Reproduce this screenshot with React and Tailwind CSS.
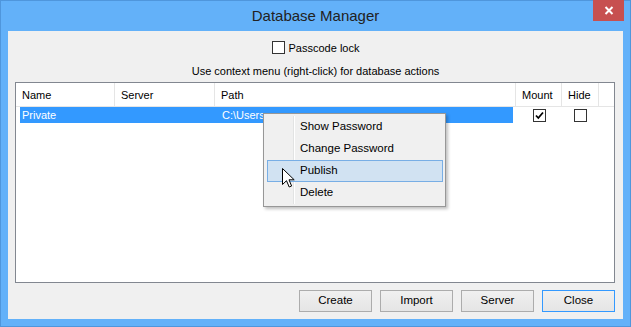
import React from "react";

const cols = [
  { label: "Name", w: "w-[99px]" },
  { label: "Server", w: "w-[100px]" },
  { label: "Path", w: "w-[301px]" },
  { label: "Mount", w: "w-[46px]" },
  { label: "Hide", w: "w-[37px]" },
];

function CheckBox({ checked }) {
  return (
    <div className="w-[13px] h-[13px] border border-[#333] bg-white flex items-center justify-center">
      {checked && (
        <svg width="9" height="9" viewBox="0 0 9 9">
          <path d="M1 4.5 L3.3 7 L8 1.5" stroke="#000" strokeWidth="1.8" fill="none" />
        </svg>
      )}
    </div>
  );
}

function Button({ children, primary }) {
  return (
    <button
      className={
        "w-[73px] h-[22px] text-[11.5px] text-black bg-gradient-to-b from-[#f0f0f0] to-[#e5e5e5] border " +
        (primary ? "border-[#3399ff]" : "border-[#acacac]")
      }
    >
      {children}
    </button>
  );
}

const menuItems = ["Show Password", "Change Password", "Publish", "Delete"];

export default function App() {
  return (
    <div
      className="relative w-[631px] h-[327px] bg-[#63b1f9] border border-[#4f96dc] flex flex-col"
      style={{ fontFamily: '"Liberation Sans", Arial, sans-serif' }}
    >
      {/* title bar */}
      <div className="relative h-[30px] flex items-center justify-center">
        <span className="text-[15px] text-[#222] pt-[1px]">Database Manager</span>
        <div className="absolute right-[6px] top-[-1px] w-[31px] h-[21px] bg-[#c75050] flex items-center justify-center">
          <svg width="10" height="9" viewBox="0 0 10 9">
            <path d="M1.5 1 L8.5 8 M8.5 1 L1.5 8" stroke="#fff" strokeWidth="2" />
          </svg>
        </div>
      </div>

      {/* client area */}
      <div className="mx-[7px] h-[288px] bg-[#f0f0f0] flex flex-col text-[11px] text-black">
        <div className="mt-[10px] h-[13px] flex items-center justify-center gap-[4px]">
          <CheckBox />
          <span className="leading-[13px] pt-[1px]">Passcode lock</span>
        </div>
        <div className="mt-[10px] leading-[15px] text-center">
          Use context menu (right-click) for database actions
        </div>

        <div className="mt-[3px] ml-[7px] mr-[8px] h-[201px] border border-[#828790] bg-white flex flex-col">
          <div className="h-[24px] flex border-b border-[#e5e5e5]">
            {cols.map((c) => (
              <div
                key={c.label}
                className={c.w + " border-r border-[#e5e5e5] flex items-center pl-[6px] pt-[2px]"}
              >
                {c.label}
              </div>
            ))}
          </div>
          <div className="h-[16px] flex items-center">
            <div className="ml-[4px] w-[493px] h-full bg-[#3399ff] text-white flex items-center pt-[1px]">
              <span className="w-[96px] pl-[2px]">Private</span>
              <span className="w-[100px]"></span>
              <span className="pl-[6px]">C:\Users</span>
            </div>
            <div className="ml-[3px] w-[46px] flex justify-center">
              <CheckBox checked />
            </div>
            <div className="w-[37px] flex justify-center">
              <CheckBox />
            </div>
          </div>
        </div>

        <div className="mt-[7px] mr-[8px] flex justify-end gap-[8px]">
          <Button>Create</Button>
          <Button>Import</Button>
          <Button>Server</Button>
          <Button primary>Close</Button>
        </div>
      </div>

      {/* context menu */}
      <div className="absolute left-[262px] top-[112px] w-[183px] py-[2px] bg-[#f0f0f0] border border-[#979797] shadow-[2px_2px_3px_rgba(0,0,0,0.25)] text-[11.5px] text-black">
        <div className="absolute left-[29px] top-[2px] bottom-[2px] w-[1px] bg-[#e2e3e3]"></div>
        <div className="absolute left-[30px] top-[2px] bottom-[2px] w-[1px] bg-white"></div>
        {menuItems.map((m) => (
          <div key={m} className="relative h-[22px] flex items-center">
            {m === "Publish" && (
              <div className="absolute left-[3px] right-[2px] top-0 bottom-0 bg-[#d1e2f2] border border-[#78aee5]"></div>
            )}
            <span className="relative pl-[36px] -mt-[1px]">{m}</span>
          </div>
        ))}
      </div>

      {/* mouse cursor */}
      <svg className="absolute left-[281px] top-[167px]" width="13" height="21" viewBox="0 0 13 21">
        <path
          d="M0.5 0.5 L0.5 16.5 L4.5 12.7 L7.2 19 L9.6 18 L7 11.8 L12.2 11.8 Z"
          fill="#fff"
          stroke="#000"
          strokeWidth="1"
          strokeLinejoin="miter"
        />
      </svg>
    </div>
  );
}
